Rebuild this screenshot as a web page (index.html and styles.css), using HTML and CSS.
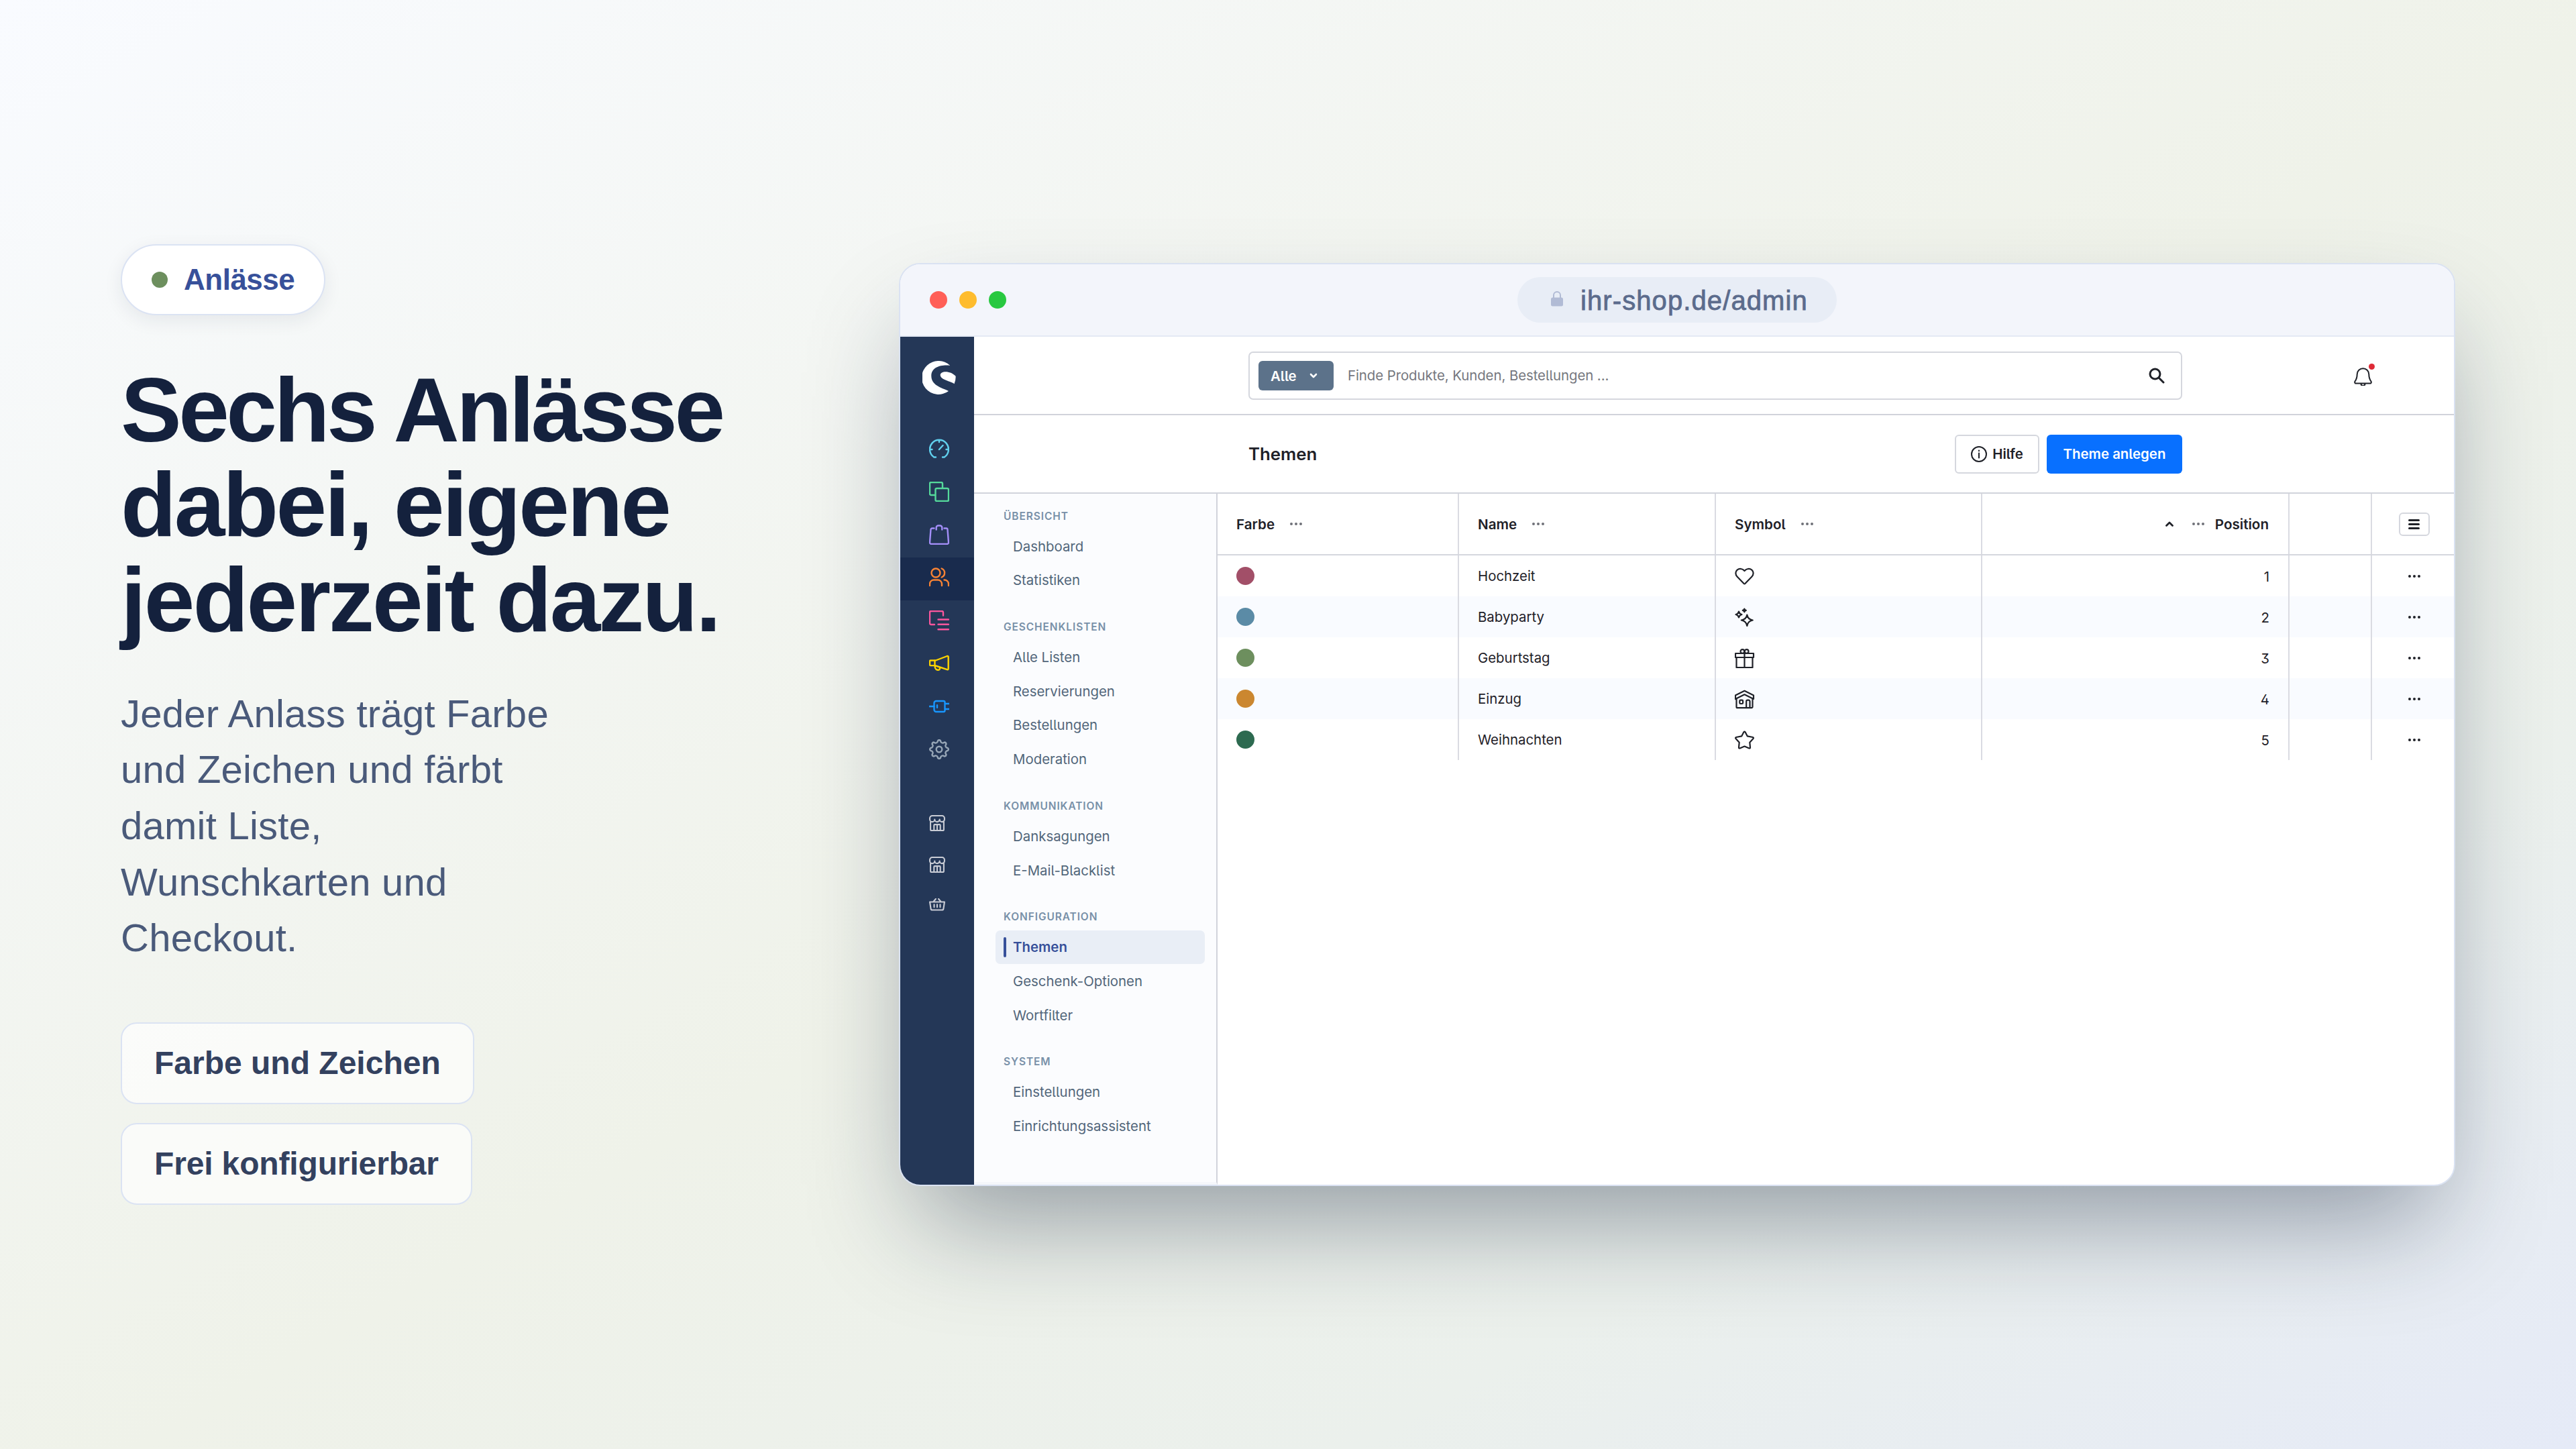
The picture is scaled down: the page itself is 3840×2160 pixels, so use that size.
FILE: index.html
```
<!DOCTYPE html>
<html lang="de">
<head>
    <meta charset="UTF-8">
    <meta name="viewport" content="width=device-width, initial-scale=1.0">
    <title>Themen</title>
    <link rel="stylesheet" href="styles.css">
</head>
<body>
    <!-- Icons -->
    <svg class="sprite" width="0" height="0">
        <symbol id="i-dashboard" viewBox="0 0 30 30"><path d="M10 27.5H7.3A14 14 0 1 1 22.7 27.5H20M15 2v3M1.5 16h3M28.5 16h-3M15 16l5.5-6"/></symbol>
        <symbol id="i-catalog" viewBox="0 0 30 30"><path d="M9 20H3a2 2 0 0 1-2-2V3a2 2 0 0 1 2-2h15a2 2 0 0 1 2 2v6.5"/><rect x="9.5" y="10" width="19.5" height="19" rx="2"/></symbol>
        <symbol id="i-bag" viewBox="0 0 30 30"><path d="M7.5 5.5H4.5a2 2 0 0 0-2 2L1 26.5a2.3 2.3 0 0 0 2.3 2.5h23.4A2.3 2.3 0 0 0 29 26.5L27.5 7.5a2 2 0 0 0-2-2h-3M10.7 7.5V4.5a3 3 0 0 1 3-3h2.6a3 3 0 0 1 3 3v3"/></symbol>
        <symbol id="i-users" viewBox="0 0 30 30"><circle cx="10" cy="8" r="6.5"/><path d="M18.7 1.5a7 7 0 0 1 0 13M1 27v-2.5a6 6 0 0 1 6-6h6a6 6 0 0 1 6 6V27M22.5 18.5a6 6 0 0 1 6.5 6V27"/></symbol>
        <symbol id="i-content" viewBox="0 0 30 30"><path d="M8 21H3a2 2 0 0 1-2-2V3a2 2 0 0 1 2-2h16a2 2 0 0 1 2 2v4.5M13.5 13.5H29M13.5 20.7H29M13.5 28.2H29"/></symbol>
        <symbol id="i-marketing" viewBox="0 0 30 30"><path d="M8.500 11L27 4q1.700-.4 1.700 1.300v17.500q0 1.700-1.700 1.300L8.500 18zM8.500 10.500H2.300a1.300 1.300 0 0 0-1.300 1.300v5a1.300 1.300 0 0 0 1.300 1.300h6.200zM8.700 18.300v1.500c0 3.200 2.600 5 5 5 1.700 0 2.600-1.300 2.300-3.500"/></symbol>
        <symbol id="i-plug" viewBox="0 0 30 30"><path d="M.5 15h7M24 11h5.5M24 19h5.5M12 13.300v3.400"/><path d="M10.500 7h11.200a1.800 1.800 0 0 1 1.800 1.800v12.400a1.800 1.800 0 0 1-1.800 1.800H10.500a3 3 0 0 1-3-3V10a3 3 0 0 1 3-3z"/></symbol>
        <symbol id="i-cog" viewBox="-15 -15 30 30"><circle r="4.3"/><path d="M-1.800-13Q0-14.600 1.800-13L2.600-10.800Q4.200-9 6-9.500L7.900-10.500Q10.300-10.300 10.500-7.900L9.500-6Q9-4.200 10.800-2.600L13-1.800Q14.600 0 13 1.800L10.800 2.600Q9 4.200 9.500 6L10.500 7.900Q10.300 10.300 7.900 10.500L6 9.500Q4.200 9 2.600 10.800L1.800 13Q0 14.600-1.800 13L-2.600 10.800Q-4.200 9-6 9.500L-7.900 10.500Q-10.300 10.300-10.500 7.900L-9.500 6Q-9 4.200-10.800 2.600L-13 1.800Q-14.600 0-13-1.800L-10.800-2.600Q-9-4.200-9.500-6L-10.500-7.900Q-10.300-10.300-7.900-10.500L-6-9.500Q-4.200-9-2.600-10.800Z"/></symbol>
        <symbol id="i-store" viewBox="0 0 23 23"><path d="M1 6.200a3.500 3.500 0 0 0 7 0 3.500 3.500 0 0 0 7 0 3.500 3.500 0 0 0 7 0V4.500A3.500 3.500 0 0 0 18.500 1h-14A3.500 3.500 0 0 0 1 4.500zM2 9.500v11a1.500 1.500 0 0 0 1.500 1.500h16a1.500 1.500 0 0 0 1.500-1.500v-11M7 22v-7.500a1 1 0 0 1 1-1h7a1 1 0 0 1 1 1V22M11.500 13.500V22"/></symbol>
        <symbol id="i-basket" viewBox="0 0 23 23"><path d="M1 5.300h21l-1.500 9.800a2 2 0 0 1-2 1.700h-14a2 2 0 0 1-2-1.700zM6 5L9.500 1M17 5L13.500 1M7.200 9v3.800M11.500 9v3.800M15.800 9v3.800"/></symbol>
        <symbol id="i-heart" viewBox="0 0 30 30"><path d="M13.400 25.800L3.700 15.800C.5 12.500.7 8 3.600 5.600 6.800 3 11.500 3.500 14.500 7c3-3.500 7.700-4 10.900-1.400 2.900 2.400 3.100 6.900-.1 10.200L15.600 25.800q-1.100 1-2.200 0z"/></symbol>
        <symbol id="i-sparkles" viewBox="0 0 30 30"><path d="M18.300 11.500Q19.500 18.300 26.800 19.500 19.500 20.700 18.300 28 17.100 20.700 9.800 19.500 17.100 18.300 18.300 11.500z"/><path class="solid" d="M6 6.500Q6.900 10.100 10.500 11 6.900 11.900 6 15.500 5.100 11.900 1.500 11 5.100 10.100 6 6.500zM14.300 2.500Q14.800 4.400 16.800 4.900 14.800 5.400 14.300 7.300 13.800 5.400 11.800 4.900 13.800 4.400 14.300 2.500z"/></symbol>
        <symbol id="i-gift" viewBox="0 0 30 30"><path d="M1 8h27v6H1zM2.500 14h24v15h-24zM14.500 8v21"/><circle cx="11.4" cy="5" r="2.9"/><circle cx="17.6" cy="5" r="2.9"/></symbol>
        <symbol id="i-house" viewBox="0 0 30 30"><path d="M1 9.500L14.500 2.800 28 9.500V15L14.500 8.300 1 15zM2.500 14.500v12.200a1.500 1.500 0 0 0 1.500 1.500h21a1.500 1.500 0 0 0 1.500-1.500V14.500M17.200 28v-9.500a1.800 1.800 0 0 1 1.800-1.800h1.700a1.800 1.800 0 0 1 1.800 1.800V28"/><rect x="7.3" y="16.7" width="4.8" height="5.3" rx="1.2"/></symbol>
        <symbol id="i-star" viewBox="0 0 30 30"><path d="M13.400 3.300q1.100-1.500 2.200 0L18.700 9.300 27 11q1.500.6.500 2L22.300 18.700 23 26.200q0 1.600-1.500 1.200L14.500 24.500 7.500 27.400Q6 27.800 6 26.200L6.700 18.700 1.500 13Q.5 11.600 2 11L10.300 9.300z"/></symbol>
        <symbol id="i-dots" viewBox="0 0 18 4"><circle cx="2" cy="2" r="2"/><circle cx="9" cy="2" r="2"/><circle cx="16" cy="2" r="2"/></symbol>
    </svg>

    <div class="slide">
        <!-- Left column -->
        <div class="intro">
            <div class="badge"><span class="badge-dot"></span><span>Anlässe</span></div>
            <h1 class="headline">
                <span class="line line-1">Sechs Anlässe</span>
                <span class="line line-2">dabei, eigene</span>
                <span class="line line-3">jederzeit dazu.</span>
            </h1>
            <p class="lead">Jeder Anlass trägt Farbe<br>und Zeichen und färbt<br>damit Liste,<br>Wunschkarten und<br>Checkout.</p>
            <div class="chips">
                <span class="chip">Farbe und Zeichen</span>
                <span class="chip chip-narrow">Frei konfigurierbar</span>
            </div>
        </div>

        <!-- Browser window -->
        <div class="window">
            <div class="window-bar">
                <div class="lights"><span class="light red"></span><span class="light yellow"></span><span class="light green"></span></div>
                <div class="url">
                    <svg class="lock" viewBox="0 0 18 24"><path d="M4 11V7a5 5 0 0 1 10 0v4"/><rect x="0" y="10.5" width="18" height="13" rx="2.5"/></svg>
                    <span>ihr-shop.de/admin</span>
                </div>
            </div>

            <div class="admin">
                <!-- Main menu -->
                <nav class="rail">
                    <svg class="logo" viewBox="0 0 50 50"><path d="M41.3 6.900A25 25 0 1 0 39 45C33 41 13.300 38 13.300 22.500 13.300 9 28 5.500 41.300 6.900zM47.500 34.300C44 30.500 26.700 28.500 26.700 21 26.700 14.500 42 14 49.600 22.800A25 25 0 0 1 47.500 34.300z"/></svg>
                    <a class="rail-item cyan"><svg><use href="#i-dashboard"/></svg></a>
                    <a class="rail-item mint"><svg><use href="#i-catalog"/></svg></a>
                    <a class="rail-item violet"><svg><use href="#i-bag"/></svg></a>
                    <a class="rail-item orange active"><svg><use href="#i-users"/></svg></a>
                    <a class="rail-item pink"><svg><use href="#i-content"/></svg></a>
                    <a class="rail-item gold"><svg><use href="#i-marketing"/></svg></a>
                    <a class="rail-item blue"><svg><use href="#i-plug"/></svg></a>
                    <a class="rail-item grey"><svg><use href="#i-cog"/></svg></a>
                    <div class="rail-extra">
                        <a><svg><use href="#i-store"/></svg></a>
                        <a><svg><use href="#i-store"/></svg></a>
                        <a><svg><use href="#i-basket"/></svg></a>
                    </div>
                </nav>

                <div class="main">
                    <div class="topbar">
                        <div class="search">
                            <button class="search-type"><span>Alle</span><svg viewBox="0 0 12 8"><path d="M2 2l4 4 4-4"/></svg></button>
                            <span class="search-hint">Finde Produkte, Kunden, Bestellungen ...</span>
                            <svg class="search-icon" viewBox="0 0 24 24"><circle cx="9.5" cy="9.5" r="7.5"/><path d="M15 15l7 7"/></svg>
                        </div>
                        <div class="bell">
                            <svg viewBox="0 0 27 27"><path d="M2 23.500q-1.400-1.200-.5-3c2-2.700 3.200-5 3.200-10.500a8.300 8.300 0 0 1 17.600 0c0 5.500 1.200 7.800 3.200 10.500q.9 1.800-.5 3zM10.500 24a3 3 0 0 0 6 0"/></svg>
                            <span class="bell-dot"></span>
                        </div>
                    </div>

                    <div class="page-head">
                        <h2>Themen</h2>
                        <div class="actions">
                            <button class="btn"><svg viewBox="0 0 24 24"><circle cx="12" cy="12" r="11"/><path d="M12 10.500v7M12 6.500v.8"/></svg><span>Hilfe</span></button>
                            <button class="btn primary"><span>Theme anlegen</span></button>
                        </div>
                    </div>

                    <div class="content">
                        <aside class="side">
                            <div class="group">
                                <h3>Übersicht</h3>
                                <a>Dashboard</a>
                                <a>Statistiken</a>
                            </div>
                            <div class="group">
                                <h3>Geschenklisten</h3>
                                <a>Alle Listen</a>
                                <a>Reservierungen</a>
                                <a>Bestellungen</a>
                                <a>Moderation</a>
                            </div>
                            <div class="group">
                                <h3>Kommunikation</h3>
                                <a>Danksagungen</a>
                                <a>E-Mail-Blacklist</a>
                            </div>
                            <div class="group">
                                <h3>Konfiguration</h3>
                                <a class="active">Themen</a>
                                <a>Geschenk-Optionen</a>
                                <a>Wortfilter</a>
                            </div>
                            <div class="group">
                                <h3>System</h3>
                                <a>Einstellungen</a>
                                <a>Einrichtungsassistent</a>
                            </div>
                        </aside>

                        <div class="table">
                            <div class="row head">
                                <div class="cell"><span>Farbe</span><svg class="dots"><use href="#i-dots"/></svg></div>
                                <div class="cell"><span>Name</span><svg class="dots"><use href="#i-dots"/></svg></div>
                                <div class="cell"><span>Symbol</span><svg class="dots"><use href="#i-dots"/></svg></div>
                                <div class="cell right"><svg class="caret" viewBox="0 0 12 8"><path d="M1.500 6.500L6 2l4.500 4.500"/></svg><svg class="dots"><use href="#i-dots"/></svg><span>Position</span></div>
                                <div class="cell"></div>
                                <div class="cell menu"><button class="list-btn"><i></i><i></i><i></i></button></div>
                            </div>
                            <div class="row">
                                <div class="cell"><span class="swatch wedding"></span></div>
                                <div class="cell"><span>Hochzeit</span></div>
                                <div class="cell"><svg class="symbol"><use href="#i-heart"/></svg></div>
                                <div class="cell right"><span>1</span></div>
                                <div class="cell"></div>
                                <div class="cell menu"><svg class="dots"><use href="#i-dots"/></svg></div>
                            </div>
                            <div class="row">
                                <div class="cell"><span class="swatch baby"></span></div>
                                <div class="cell"><span>Babyparty</span></div>
                                <div class="cell"><svg class="symbol"><use href="#i-sparkles"/></svg></div>
                                <div class="cell right"><span>2</span></div>
                                <div class="cell"></div>
                                <div class="cell menu"><svg class="dots"><use href="#i-dots"/></svg></div>
                            </div>
                            <div class="row">
                                <div class="cell"><span class="swatch birthday"></span></div>
                                <div class="cell"><span>Geburtstag</span></div>
                                <div class="cell"><svg class="symbol"><use href="#i-gift"/></svg></div>
                                <div class="cell right"><span>3</span></div>
                                <div class="cell"></div>
                                <div class="cell menu"><svg class="dots"><use href="#i-dots"/></svg></div>
                            </div>
                            <div class="row">
                                <div class="cell"><span class="swatch moving"></span></div>
                                <div class="cell"><span>Einzug</span></div>
                                <div class="cell"><svg class="symbol"><use href="#i-house"/></svg></div>
                                <div class="cell right"><span>4</span></div>
                                <div class="cell"></div>
                                <div class="cell menu"><svg class="dots"><use href="#i-dots"/></svg></div>
                            </div>
                            <div class="row">
                                <div class="cell"><span class="swatch xmas"></span></div>
                                <div class="cell"><span>Weihnachten</span></div>
                                <div class="cell"><svg class="symbol"><use href="#i-star"/></svg></div>
                                <div class="cell right"><span>5</span></div>
                                <div class="cell"></div>
                                <div class="cell menu"><svg class="dots"><use href="#i-dots"/></svg></div>
                            </div>
                        </div>
                    </div>
                </div>
            </div>
        </div>
    </div>
</body>
</html>
```

FILE: styles.css
```
* {
    box-sizing: border-box;
}
body {
    margin: 0;
    font-family: "Liberation Sans", Arial, sans-serif;
    color: #14213d;
}
svg {
    display: block;
    flex-shrink: 0;
    fill: none;
    stroke: currentColor;
    stroke-width: 2;
    stroke-linecap: round;
    stroke-linejoin: round;
}
.sprite {
    position: absolute;
}
button {
    font: inherit;
    padding: 0;
    cursor: pointer;
}
.slide {
    width: 3840px;
    height: 2160px;
    padding: 0 180px;
    display: flex;
    align-items: center;
    justify-content: space-between;
    overflow: hidden;
    background: linear-gradient(150deg, #f9fbff 0%, #eff2e9 52%, #ebf0ec 76%, #e5eaf7 100%);
}

/* Left column */
.intro {
    display: flex;
    flex-direction: column;
    align-items: flex-start;
}
.badge {
    display: flex;
    align-items: center;
    gap: 24px;
    height: 106px;
    padding: 0 44px;
    border: 2px solid #dbe3f3;
    border-radius: 53px;
    background: #fff;
    box-shadow: 0 8px 28px rgba(20, 33, 61, 0.08);
    color: #37509a;
    font-size: 44px;
    font-weight: bold;
    letter-spacing: -0.5px;
}
.badge-dot {
    width: 24px;
    height: 24px;
    border-radius: 50%;
    background: #6d8f5e;
}
.headline {
    margin: 71px 0 57px;
    font-size: 136px;
    line-height: 141.2px;
    font-weight: bold;
    white-space: nowrap;
}
.line {
    display: block;
}
.line-1 {
    letter-spacing: -4.5px;
}
.line-2 {
    letter-spacing: -3.4px;
}
.line-3 {
    letter-spacing: -3px;
}
.lead {
    margin: 0 0 84px;
    color: #4a5a7a;
    font-size: 58px;
    line-height: 83.6px;
    letter-spacing: 0.25px;
}
.chips {
    display: flex;
    flex-direction: column;
    align-items: flex-start;
    gap: 28px;
}
.chip {
    height: 122px;
    padding: 0 48px;
    border: 2px solid #dbe3f3;
    border-radius: 24px;
    background: rgba(255, 255, 255, 0.65);
    color: #33415f;
    font-size: 48px;
    font-weight: bold;
    line-height: 118px;
}
.chip-narrow {
    letter-spacing: -0.15px;
}

/* Browser window */
.window {
    width: 2320px;
    height: 1376px;
    border: 2px solid #dae2f2;
    border-radius: 32px;
    overflow: hidden;
    background: #fff;
    box-shadow: 0 80px 160px -30px rgba(20, 33, 61, 0.41);
}
.window-bar {
    display: grid;
    grid-template-columns: 1fr auto 1fr;
    align-items: center;
    height: 108px;
    padding: 0 44px;
    border-bottom: 2px solid #e4e9f4;
    background: #f3f5fb;
}
.lights {
    display: flex;
    gap: 18px;
}
.light {
    width: 26px;
    height: 26px;
    border-radius: 50%;
}
.red { background: #ff5f57; }
.yellow { background: #febc2e; }
.green { background: #28c840; }
.url {
    display: flex;
    align-items: center;
    width: 476px;
    height: 68px;
    padding: 2px 0 0 50px;
    border-radius: 34px;
    background: #e8edf6;
    color: #5b6b8c;
    font-size: 40px;
    letter-spacing: 1.1px;
    -webkit-text-stroke: 0.8px #5b6b8c;
}
.lock {
    width: 18px;
    height: 24px;
    margin: -6px 26px 0 0;
    color: #b1bbd5;
}
.lock rect {
    fill: currentColor;
    stroke: none;
}

/* Admin */
.admin {
    display: flex;
    height: 1264px;
    font-family: Inter, sans-serif;
    font-size: 20.4px;
    font-feature-settings: "ss01", "cv05";
    color: #1f2128;
}
.rail {
    width: 110px;
    background: #243757;
}
.logo {
    width: 50px;
    height: 50px;
    margin: 36px 0 51px 33px;
    fill: #fff;
    stroke: none;
}
.rail-item {
    display: flex;
    align-items: center;
    height: 64px;
    padding: 0 0 4px 43px;
}
.rail-item svg {
    width: 30px;
    height: 30px;
    overflow: visible;
    stroke-width: 2.4;
}
.rail-item.active {
    background: #192b4d;
}
.cyan { color: #61d0ee; }
.mint { color: #55d99b; }
.violet { color: #a48ff9; }
.orange { color: #f98334; }
.pink { color: #fa569d; }
.gold { color: #fdd300; }
.blue { color: #1896fe; }
.grey { color: #97a6b6; }
.rail-extra {
    margin-top: 45px;
    color: #c9ccd5;
}
.rail-extra a {
    display: flex;
    align-items: center;
    height: 62px;
    padding-left: 43px;
}
.rail-extra svg {
    width: 24px;
    height: 24px;
    stroke-width: 2;
}
.main {
    flex: 1;
    display: flex;
    flex-direction: column;
}
.topbar {
    display: flex;
    align-items: center;
    height: 117px;
    padding-left: 409px;
    border-bottom: 2px solid #d1d3db;
}
.search {
    display: flex;
    align-items: center;
    width: 1392px;
    height: 72px;
    padding: 0 24px 0 13px;
    border: 2px solid #d5d7de;
    border-radius: 7px;
}
.search-type {
    display: flex;
    align-items: center;
    gap: 19px;
    width: 112px;
    height: 44px;
    padding: 1px 0 0 18px;
    border: 0;
    border-radius: 6px;
    background: #5c728a;
    color: #fff;
    font-weight: 600;
}
.search-type svg {
    width: 12px;
    height: 8px;
    stroke-width: 2.6;
}
.search-hint {
    margin-left: 21px;
    color: #75777e;
    letter-spacing: -0.07px;
}
.search-icon {
    width: 24px;
    height: 24px;
    margin-left: auto;
    stroke-width: 3;
}
.bell {
    position: relative;
    margin: 3px 0 0 256px;
}
.bell svg {
    width: 27px;
    height: 27px;
}
.bell-dot {
    position: absolute;
    top: -6px;
    right: -4px;
    width: 9px;
    height: 9px;
    border-radius: 50%;
    background: #de2a36;
}
.page-head {
    display: flex;
    align-items: center;
    justify-content: space-between;
    height: 117px;
    padding: 0 405px 0 409px;
    border-bottom: 2px solid #d1d3db;
}
.page-head h2 {
    margin: 0;
    font-size: 25.8px;
    font-weight: 600;
}
.actions {
    display: flex;
    gap: 11px;
}
.btn {
    display: flex;
    align-items: center;
    justify-content: center;
    gap: 8px;
    width: 126px;
    height: 58px;
    border: 2px solid #d5d7de;
    border-radius: 6px;
    background: #fff;
    color: #1f2128;
    font-weight: 600;
}
.btn svg {
    width: 24px;
    height: 24px;
}
.btn.primary {
    width: 202px;
    border: 0;
    background: #0870ff;
    color: #fff;
}
.content {
    flex: 1;
    display: flex;
}

/* Sub navigation */
.side {
    width: 363px;
    padding: 19.5px 17px 0 32px;
    border-right: 2px solid #d1d3db;
    border-bottom: 4px solid #f5f7fb;
    background: #fbfcfe;
}
.group {
    margin-bottom: 31px;
}
.group h3 {
    margin: 0 0 5.6px;
    padding-left: 12px;
    color: #7890a8;
    font-size: 15.5px;
    font-weight: 600;
    line-height: 28px;
    letter-spacing: 0.9px;
    text-transform: uppercase;
}
.group a {
    display: flex;
    align-items: center;
    height: 50px;
    margin-bottom: 0.75px;
    padding-left: 26px;
    color: #52667a;
}
.group a.active {
    padding-left: 12px;
    border-radius: 7px;
    background: #e9eef6;
    color: #37509a;
    font-weight: 600;
}
.group a.active::before {
    content: "";
    width: 4px;
    height: 30px;
    margin-right: 10px;
    border-radius: 2px;
    background: #37509a;
}

/* Table */
.table {
    flex: 1;
}
.row {
    display: grid;
    grid-template-columns: 360px 383px 397px 458px 123px 1fr;
    height: 61px;
}
.row:nth-child(odd):not(.head) {
    background: #f9fbff;
}
.row.head {
    height: 92px;
    border-bottom: 2px solid #d5d7de;
    font-size: 20.6px;
    font-weight: 600;
}
.cell {
    display: flex;
    align-items: center;
    padding: 0 28px;
    border-right: 2px solid #dadbe2;
}
.cell:last-child {
    border-right: 0;
}
.cell.right {
    justify-content: flex-end;
}
.head .cell.right {
    padding-right: 29px;
}
.row:not(.head) .cell.right {
    padding-top: 2px;
}
.cell.menu {
    justify-content: center;
    padding: 0 0 0 3px;
}
.dots {
    width: 18px;
    height: 4px;
    fill: currentColor;
    stroke: none;
}
.head .dots {
    margin-left: 23px;
    color: #6f7178;
}
.head .right .dots {
    margin: 0 16px 0 28px;
}
.caret {
    width: 12px;
    height: 8px;
    stroke-width: 2.8;
}
.list-btn {
    display: flex;
    flex-direction: column;
    align-items: center;
    justify-content: center;
    gap: 3px;
    width: 46px;
    height: 35px;
    border: 2px solid #d5d7de;
    border-radius: 6px;
    background: #fff;
}
.list-btn i {
    width: 17px;
    height: 3px;
    border-radius: 1.5px;
    background: #1f2128;
}
.swatch {
    width: 27px;
    height: 27px;
    border-radius: 50%;
}
.wedding { background: #a24f68; }
.baby { background: #5b8ba6; }
.birthday { background: #6d8f5e; }
.moving { background: #cb8730; }
.xmas { background: #2d6a50; }
.symbol {
    width: 30px;
    height: 30px;
    stroke-width: 2.2;
}
.symbol .solid {
    fill: currentColor;
}
```
